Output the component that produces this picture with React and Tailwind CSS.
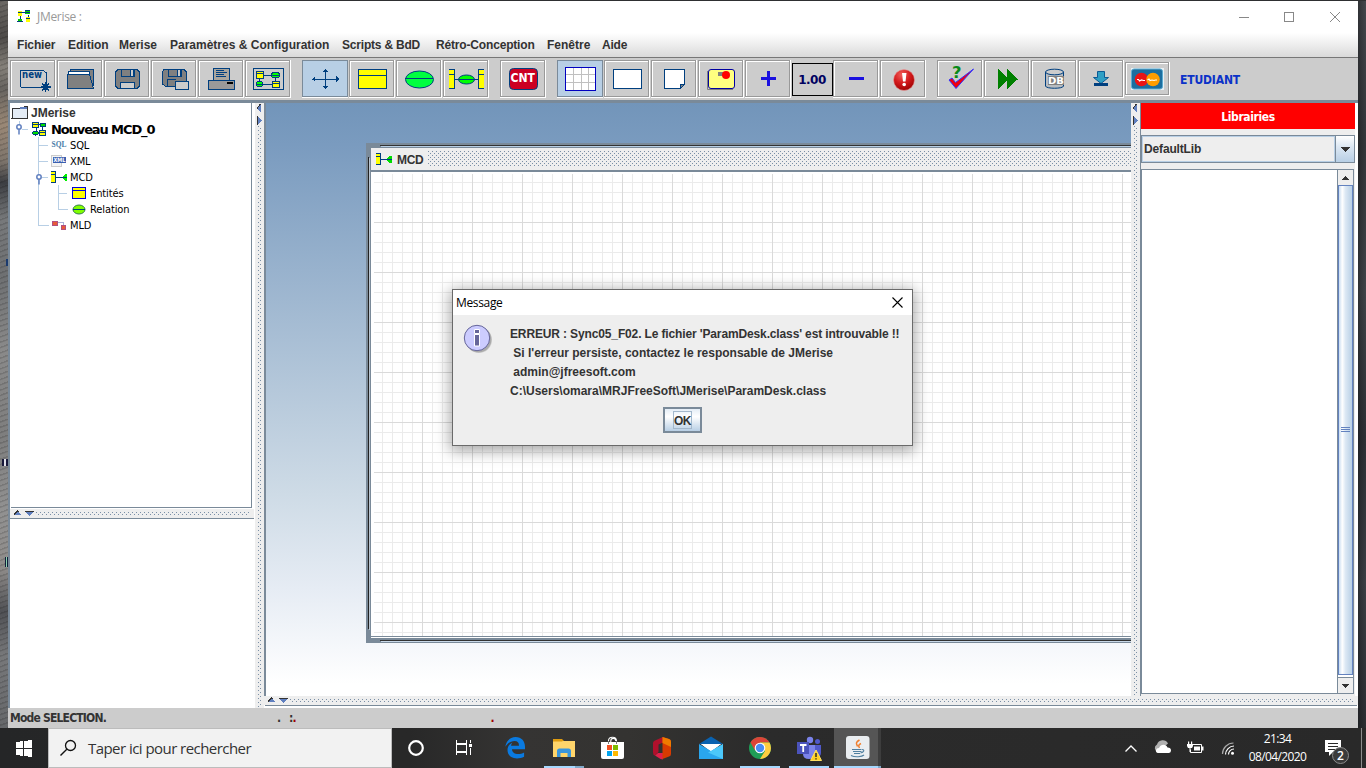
import React from "react";

const DOTS =
  "bg-[#eeeeee] bg-[radial-gradient(circle_at_0.5px_0.5px,#7a8fa6_0.6px,transparent_0.7px),radial-gradient(circle_at_0.5px_0.5px,#7a8fa6_0.6px,transparent_0.7px)] bg-[length:4px_4px]";

function Pic({ x, y, w, h, smooth, children }) {
  return (
    <svg
      className="block shrink-0"
      width={w}
      height={h}
      viewBox={`${x} ${y} ${w} ${h}`}
      shapeRendering={smooth ? "auto" : "crispEdges"}
      fill="none"
    >
      {children}
    </svg>
  );
}

function Tool({ x, on, smooth, children }) {
  return (
    <div className="mr-px h-[38px] w-[46px] shrink-0 border-r border-b border-white">
      <div
        className={
          on
            ? "h-[37px] w-[46px] border border-[#7a8a99] bg-[#b8cfe5]"
            : "h-[37px] w-[45px] border border-[#999999] bg-[#cccccc]"
        }
      >
        <div className={on ? "h-full w-full" : "h-full w-full border-t border-l border-white"}>
          <div className={on ? "" : "-mt-px -ml-px"}>
            <Pic x={x + 1} y={61} w={43} h={35} smooth={smooth}>
              {children}
            </Pic>
          </div>
        </div>
      </div>
    </div>
  );
}

const navy = "#003f7f";

function Toolbar() {
  return (
    <div className="flex h-[42px] shrink-0 items-start bg-[#cccccc] pt-[2px] pl-[2px]">
      <Tool x={10}>
        <path d="M20.5 87V70.5H43.500L46.500 73V85M20.500 87.500H41" stroke={navy} />
        <text x="22" y="77.500" fontSize="10" fontWeight="700" fontFamily="DejaVu Sans, sans-serif" fill={navy} textLength="20" lengthAdjust="spacingAndGlyphs">new</text>
        <path d="M45.500 82V92M40.500 87H50.500M42 83.500L49 90.500M49 83.500L42 90.500" stroke={navy} strokeWidth="1.600" />
        <circle cx="45.500" cy="87" r="3" fill={navy} />
      </Tool>
      <Tool x={57}>
        <path d="M70 73V69.500H93.500V86" stroke={navy} fill="#808080" />
        <path d="M68.500 76V71.500H89L90 74.500" fill="#fff" stroke={navy} />
        <path d="M67.500 74.500H89.500L93.500 88.500H67.500Z" fill="#808080" stroke={navy} />
      </Tool>
      <Tool x={104}>
        <path d="M118 69.500H137L139.500 72V86L137 88.500H118L115.500 86V72Z" fill="#808080" stroke={navy} />
        <path d="M121.500 69.500V76.500H134.500V69.500" stroke={navy} />
        <path d="M130.500 69.500h3v7h-3z" fill="#ccc" stroke={navy} />
        <path d="M120.500 88.500V82.500H134.500V88.500Z" fill="#ccc" stroke={navy} />
      </Tool>
      <Tool x={151}>
        <path d="M164 69.500H184L186.500 72V86H165L162.500 84V72Z" fill="#808080" stroke={navy} />
        <path d="M168.500 69.500V76.500H181.500V69.500M167.500 86V79.500H176" stroke={navy} />
        <path d="M177.500 69.500h3v7h-3z" fill="#ccc" stroke={navy} />
        <path d="M175.500 81.500H188.500V89.500H175.500Z" fill="#ccc" stroke={navy} />
      </Tool>
      <Tool x={198}>
        <path d="M213.500 68.500H229.500V80H213.500Z" fill="#aaa69e" stroke={navy} />
        <path d="M216 70.500h8M216 72.500h11M216 74.500h8M216 76.500h10" stroke={navy} />
        <path d="M208.500 80.500H234.500V89.500H208.500Z" fill="#999" stroke={navy} />
        <path d="M227 82h6v2h-6z" fill="#000" />
      </Tool>
      <Tool x={245}>
        <path d="M253.500 68.500H283.500V89.500H253.500Z" stroke={navy} />
        <path d="M263 75.500h8M259.500 78v4M275.500 78v4M264 84.500h8" stroke={navy} />
        <path d="M256.500 71.500h7v7h-7zM272.500 81.500h7v6h-7zM256 73.500h8M272 83.500h8" fill="#ff0" stroke={navy} />
        <ellipse cx="275.500" cy="75" rx="4.500" ry="2.500" fill="#0f0" stroke={navy} />
        <ellipse cx="259.500" cy="84" rx="3.500" ry="2.500" fill="#0f0" stroke={navy} />
        <path d="M271 75.500h9M256 84.500h8" stroke={navy} />
      </Tool>
      <div className="w-[10px] shrink-0" />
      <Tool x={302} on>
        <path d="M312 79H339M325.500 69.500V88.500" stroke={navy} />
        <path d="M312 79l3-3v6zM339 79l-3-3v6zM325.500 69l-2.500 3h5zM325.500 89l-2.500-3h5z" fill={navy} />
      </Tool>
      <Tool x={349}>
        <path d="M358.500 69.500H386.500V88.500H358.500ZM358.500 75.500H386.500" fill="#ff0" stroke={navy} />
      </Tool>
      <Tool x={396} smooth>
        <ellipse cx="419.500" cy="79.500" rx="14" ry="8.500" fill="#00ff40" stroke={navy} />
        <path d="M405 78.500H433" stroke={navy} />
      </Tool>
      <Tool x={443}>
        <path d="M449 69h6v20h-6zM478 69h6v20h-6z" fill="#ff0" />
        <path d="M449 69.500h5.500v19H449M449 74.500h5M484 69.500h-5.500v19H484M479 74.500h5M455 79.500h24" stroke={navy} />
        <ellipse cx="466.500" cy="79.500" rx="8" ry="4.500" fill="#0f0" stroke={navy} shapeRendering="auto" />
        <path d="M458 79.500h17" stroke={navy} />
      </Tool>
      <div className="w-[10px] shrink-0" />
      <Tool x={500} smooth>
        <rect x="509.500" y="68.500" width="28" height="21" rx="4" fill="#cc0022" stroke={navy} />
        <text x="510.500" y="82.300" fontSize="12" fontWeight="700" fontFamily="DejaVu Sans, sans-serif" fill="#fff" textLength="24.500" lengthAdjust="spacingAndGlyphs">CNT</text>
      </Tool>
      <div className="w-[10px] shrink-0" />
      <Tool x={557} on>
        <path d="M565.500 67.500h30v23h-30z" fill="#fff" stroke="#0000c0" />
        <path d="M573.500 68v22M581.500 68v22M588.500 68v22M566 74.500h29M566 82.500h29" stroke="#c0c0c0" />
      </Tool>
      <Tool x={604}>
        <path d="M613.500 69.500h28v19h-28z" fill="#fff" stroke={navy} />
      </Tool>
      <Tool x={651}>
        <path d="M664.500 69.500h20v15l-4 4h-16z" fill="#fff" stroke={navy} />
        <path d="M680.500 88.500v-4h4z" fill="#808080" stroke={navy} />
      </Tool>
      <Tool x={698} smooth>
        <path d="M707.500 71v18.500H733" stroke="#808080" />
        <rect x="708.500" y="69.500" width="26" height="19" rx="2.500" fill="#ffff80" stroke="#0000a0" />
        <path d="M718 74h7" stroke="#808080" strokeWidth="4" />
        <circle cx="726" cy="75" r="4" fill="#f00" />
      </Tool>
      <Tool x={745}>
        <path d="M761 77h15v3h-15zM767 71h3v15h-3z" fill="#1a10e0" />
      </Tool>
      <div className="mt-[3px] flex h-[33px] w-[41px] shrink-0 items-center justify-center border border-black pr-px font-['DejaVu_Sans'] text-[12px] font-bold tracking-[-0.5px] text-[#000060]">
        1.00
      </div>
      <Tool x={833}>
        <path d="M849 77h15v3h-15z" fill="#1a10e0" />
      </Tool>
      <Tool x={880} smooth>
        <defs>
          <radialGradient id="alert" cx=".4" cy=".25" r=".8">
            <stop offset="0" stopColor="#f0605c" />
            <stop offset=".5" stopColor="#d41a1c" />
            <stop offset="1" stopColor="#900" />
          </radialGradient>
        </defs>
        <circle cx="904" cy="80" r="10.500" fill="url(#alert)" stroke="#e8a0a0" strokeWidth=".6" />
        <path d="M902 73h4.500l-1 8.500h-2.500z" fill="#fff" />
        <circle cx="904.200" cy="84.500" r="1.800" fill="#fff" />
      </Tool>
      <div className="w-[10px] shrink-0" />
      <Tool x={937} smooth>
        <text x="952" y="78" fontSize="15" fontWeight="700" fontFamily="DejaVu Sans, sans-serif" fill="#088a18" textLength="9.500" lengthAdjust="spacingAndGlyphs">?</text>
        <path d="M949 80l3-2 3.500 4.500L973.500 69 956 88.500Z" fill="#f00010" stroke="#3030ff" />
      </Tool>
      <Tool x={984}>
        <path d="M998 69l9 8v-8l10.500 10.500L1007 89v-8l-9 8z" fill="#008000" />
      </Tool>
      <Tool x={1031} smooth>
        <path d="M1045.500 72v14c0 3 18 3 18 0V72" fill="#b8bcc0" stroke={navy} />
        <ellipse cx="1054.500" cy="72" rx="9" ry="2.800" fill="#ccc" stroke={navy} />
        <path d="M1048 76h16v9h-16z" fill="#808080" />
        <text x="1048" y="84" fontSize="9.500" fontWeight="700" fontFamily="DejaVu Sans, sans-serif" fill="#fff" textLength="16" lengthAdjust="spacingAndGlyphs">DB</text>
      </Tool>
      <Tool x={1078} smooth>
        <path d="M1097.500 71.500h7v6h4L1101 83.500l-7.500-6h4z" fill="#2f9fc4" stroke="#0b5a94" />
        <path d="M1094 83h14v3h-14z" fill={navy} />
      </Tool>
      <div className="mt-[2px] h-[34px] w-[45px] shrink-0 border-r border-b border-white">
        <div className="h-[33px] w-[44px] border border-[#999999]">
          <div className="h-full w-full border-t border-l border-white">
            <Pic x={1127} y={64} w={40} h={30} smooth>
              <path d="M1131 68h33v22h-33z" fill="#e8f0f4" />
              <rect x="1131.500" y="69" width="31" height="20" rx="2.500" fill="#1c6e9f" stroke="#5cabd0" />
              <circle cx="1141.500" cy="79.500" r="6.800" fill="#ea1515" />
              <circle cx="1153" cy="79.500" r="6.800" fill="#ff9d00" />
              <path d="M1137 79.500h1.500l1 1.500 2-1 2 .500 1.500 0M1147.500 80l1.500-1 1 1.500 2-.500 2 .500 1.500-.500 1.500 0" stroke="#fff" strokeWidth="1.200" />
            </Pic>
          </div>
        </div>
      </div>
      <div className="ml-[10px] flex h-[40px] items-center font-['DejaVu_Sans_Condensed','DejaVu_Sans'] text-[12px] font-bold tracking-[-0.15px] text-[#0a32c8] [font-stretch:condensed]">
        ETUDIANT
      </div>
    </div>
  );
}

function Handle({ x, y }) {
  return (
    <g shapeRendering="auto">
      <circle cx={x + 0.5} cy={y - 1} r="2.200" fill="#fff" stroke="#5f7fbf" strokeWidth="1.500" />
      <path d={`M${x + 0.5} ${y + 1.500}v5`} stroke="#5f7fbf" strokeWidth="1.500" />
    </g>
  );
}

function Row({ y, w, label, cls, children }) {
  return (
    <div className="flex h-4 items-center whitespace-nowrap">
      <Pic x={11} y={y - 8} w={w} h={16}>
        {children}
      </Pic>
      <span className={cls || "mt-[2px] font-['DejaVu_Sans_Condensed','DejaVu_Sans'] text-[11px] leading-4 tracking-[-0.1px] text-black [font-stretch:condensed]"}>
        {label}
      </span>
    </div>
  );
}

function Tree() {
  const l = "#b8cfe5";
  return (
    <div className="h-[405px] w-[241px] shrink-0 border-r border-b border-[#7a8a99] bg-white pt-[2px]">
      <Row y={113} w={20} label="JMerise" cls="font-['Liberation_Sans'] text-[12px] leading-4 font-bold text-[#333333]">
        <path d="M12.500 108.500h10l2-2h2.500v11.500h-15z" fill="#e4ecf5" stroke="#333" />
        <path d="M20 107h7v2h-7z" fill="#5f7fbf" />
      </Row>
      <Row y={129} w={40} label="Nouveau MCD_0" cls="mt-[2px] font-['DejaVu_Sans'] text-[13px] leading-4 font-bold tracking-[-1.1px] text-black">
        <path d="M19.500 121v5M22 129.500h6" stroke={l} />
        <Handle x={18.500} y={128} />
        <path d="M36 127v8M42.500 126v6M39 124.500h4" stroke={navy} />
        <path d="M32.500 122.500h6v5h-6zM39.500 130.500h6v5h-6zM32 124.500h7M39 132.500h7" fill="#ff0" stroke={navy} />
        <ellipse cx="43" cy="125" rx="3" ry="2" fill="#0d0" stroke={navy} />
        <ellipse cx="35.500" cy="133" rx="3" ry="2" fill="#0d0" stroke={navy} />
      </Row>
      <Row y={145} w={59} label="SQL">
        <path d="M38.500 137v16M38 145.500h10" stroke={l} />
        <text x="51.500" y="147" fontSize="8" fontWeight="700" fontFamily="Liberation Serif, serif" fill="#4a7da8" textLength="15" lengthAdjust="spacingAndGlyphs">SQL</text>
      </Row>
      <Row y={161} w={59} label="XML">
        <path d="M38.500 153v16M38 161.500h10" stroke={l} />
        <path d="M51.500 155.500h10v11h-10z" fill="#f4f4f4" stroke="#ccc" />
        <path d="M53 157h13v6H53z" fill="#3a5fb0" />
        <text x="53.500" y="162.300" fontSize="6" fontWeight="700" fontFamily="DejaVu Sans, sans-serif" fill="#fff" textLength="12" lengthAdjust="spacingAndGlyphs">XML</text>
      </Row>
      <Row y={177} w={59} label="MCD">
        <path d="M38.500 169v16M42 177.500h6" stroke={l} />
        <Handle x={38.500} y={178} />
        <path d="M51 172h4v10h-4z" fill="#ff0" />
        <path d="M51 171.500h4.500v10.500H51M51 174.500h4M56 177.500h7" stroke={navy} />
        <path d="M67 174v7h-2l-2-2v-3l2-2z" fill="#0e0" />
        <path d="M62 177.500h5" stroke={navy} />
      </Row>
      <Row y={193} w={79} label="Entités">
        <path d="M38.500 185v16M58.500 185v16M58 193.500h9" stroke={l} />
        <path d="M72.500 187.500h13v11h-13zM72.500 190.500h13" fill="#ff0" stroke="#0000e0" />
      </Row>
      <Row y={209} w={79} label="Relation">
        <path d="M38.500 201v16M58.500 201v8.500h9" stroke={l} />
        <ellipse cx="79" cy="209.500" rx="6" ry="4.500" fill="#80ff00" stroke="#357a50" shapeRendering="auto" />
        <path d="M73 209.500h12" stroke={navy} />
      </Row>
      <Row y={225} w={59} label="MLD">
        <path d="M38.500 217v8.500h10" stroke={l} />
        <path d="M57 222.500h6.500v3" stroke="#a8b0d8" />
        <path d="M52 221h5v5h-5zM61 225h5v5h-5z" fill="#e85a3a" />
        <path d="M52.500 221.500h5v4h-5zM61.500 225.500h4v4h-4z" stroke="#b05080" />
      </Row>
    </div>
  );
}

function SplitH() {
  return (
    <div className="flex h-[9px] items-center bg-[#eeeeee] pr-1 pl-[3px]">
      <Pic x={0} y={0} w={23} h={9}>
        <path d="M0 6L4 2l5 4z" fill="#5f7fbf" />
        <path d="M1 5.500L4.500 2l1 1" stroke="#333" />
        <path d="M12 2.500h9l-4.500 4.500z" fill="#5f7fbf" />
        <path d="M12 2.500h9" stroke="#333" />
      </Pic>
      <div className={`h-[4px] grow ${DOTS} [background-position:0_0,2px_2px]`} />
    </div>
  );
}

function SplitV({ tall }) {
  return (
    <div className={tall ? "flex h-[605px] w-[9px] shrink-0 flex-col items-center bg-[#eeeeee]" : "flex h-[593px] w-[9px] shrink-0 flex-col items-center bg-[#eeeeee]"}>
      <Pic x={0} y={0} w={9} h={23}>
        <path d="M6 1L2 5.500L6 10z" fill="#5f7fbf" />
        <path d="M5.500 1L2 5.500" stroke="#333" />
        <path d="M3 13l4 4.500L3 22z" fill="#5f7fbf" />
        <path d="M2.500 13v9" stroke="#333" />
      </Pic>
      <div className={`w-[4px] grow ${DOTS} [background-position:0_0,2px_2px]`} />
    </div>
  );
}

function Desktop() {
  return (
    <div className="relative h-[593px] w-[865px] shrink-0 overflow-hidden bg-[linear-gradient(#7295ba_0%,#7a9bbf_7%,#cedbe6_66%,#e6ecf4_82%,#ffffff_98%)]">
      <div className="absolute top-[40px] left-[100px] h-[500px] w-[900px] bg-[#7a8a99] pt-[5px] pl-[5px]">
        <div className="absolute top-[2px] left-[14px] h-px w-[886px] bg-[#333333]" />
        <div className="absolute top-[3px] left-[15px] h-px w-[886px] bg-[#b8cfe5]" />
        <div className="absolute top-[14px] left-[2px] h-[472px] w-px bg-[#222222]" />
        <div className="absolute top-[15px] left-[3px] h-[472px] w-px bg-[#b8c4d0]" />
        <div className="absolute top-[497px] left-[14px] h-px w-[886px] bg-[#333333]" />
        <div className="absolute top-[498px] left-[15px] h-px w-[886px] bg-[#c8d8e8]" />
        <div className="flex h-[22px] items-center bg-[#eeeeee] pl-[5px]">
          <Pic x={376} y={151} w={16} h={16}>
            <path d="M376 153h4v11h-4z" fill="#ff0" />
            <path d="M376 153.500h4.500v11H376M376 156.500h4M381 159.500h8" stroke={navy} />
            <path d="M392 156v7h-2l-3-2v-3l3-2z" fill="#0d0" />
            <path d="M386 159.500h6" stroke={navy} />
          </Pic>
          <span className="mt-[2px] w-[36px] pl-[5px] font-['Liberation_Sans'] text-[12px] font-bold tracking-[-0.3px] text-[#333333]">MCD</span>
          <div className={`h-[16px] grow ${DOTS} [background-position:0_0,2px_2px]`} />
        </div>
        <div className="h-[2px] bg-[#7a8a99]" />
        <div className="h-[464px] bg-white pt-[2px] pl-[3px]">
          <div className="h-[462px] bg-[linear-gradient(90deg,#dadada_1px,transparent_1px),linear-gradient(#dadada_1px,transparent_1px),linear-gradient(90deg,#ebebeb_1px,transparent_1px),linear-gradient(#ebebeb_1px,transparent_1px)] bg-[length:50px_50px,50px_50px,10px_10px,10px_10px] [background-position:48px_0,0_48px,8px_0,0_8px]" />
        </div>
        <div className="h-px bg-[#7a8a99]" />
        <div className="h-px bg-white" />
      </div>
    </div>
  );
}

function Library() {
  return (
    <div className="flex h-[593px] w-[218px] shrink-0 border-l border-[#7a8a99] bg-[#eeeeee]">
      <div className="w-[214px] shrink-0">
        <div className="flex h-[26px] items-center justify-center bg-[#ff0000] pt-px font-['DejaVu_Sans_Condensed','DejaVu_Sans'] text-[12px] font-bold tracking-[-0.4px] text-white [font-stretch:condensed]">
          Librairies
        </div>
        <div className="mt-[6px] flex h-[28px] border border-[#7a8a99]">
          <div className="flex w-[193px] items-center border border-[#b8cfe5] pl-px font-['Liberation_Sans'] text-[12px] font-bold tracking-[-0.15px] text-[#333333]">
            DefaultLib
          </div>
          <div className="flex grow items-center justify-center border-l border-[#7a8a99] bg-[linear-gradient(#ffffff,#dde8f3_40%,#b8cfe5)]">
            <Pic x={0} y={0} w={10} h={5}>
              <path d="M0 0h10L5 5z" fill="#333" />
            </Pic>
          </div>
        </div>
        <div className="mt-[6px] flex h-[525px] w-[213px] justify-end border border-[#7a8a99] bg-white">
          <div className="flex w-[16px] flex-col border-l border-[#7a8a99]">
            <div className="flex h-[15px] items-center justify-center bg-[#eeeeee]">
              <Pic x={0} y={0} w={9} h={4}>
                <path d="M0 4h9L4.500 0z" fill="#333" />
              </Pic>
            </div>
            <div className="flex grow items-center justify-center border border-[#6382bf] bg-[linear-gradient(90deg,#c8dcf0,#ffffff_25%,#dce8f4_50%,#b8cfe5)]">
              <Pic x={0} y={0} w={9} h={6}>
                <path d="M0 .500h9M0 2.500h9M0 4.500h9" stroke="#6382bf" />
              </Pic>
            </div>
            <div className="mt-[2px] flex h-[16px] items-center justify-center border-t border-[#7a8a99] bg-[#eeeeee]">
              <Pic x={0} y={0} w={9} h={4}>
                <path d="M0 0h9L4.500 4z" fill="#333" />
              </Pic>
            </div>
          </div>
        </div>
      </div>
      <div className="w-[3px] bg-white" />
    </div>
  );
}

function Dialog() {
  return (
    <div className="absolute top-[289px] left-[452px] h-[157px] w-[461px] border border-[#6a6a6a] bg-[#eeeeee] shadow-[0_3px_14px_2px_rgba(0,0,0,0.35)]">
      <div className="flex h-[25px] items-center justify-between bg-white pr-[9px] pl-[3px]">
        <span className="font-['Open_Sans'] text-[12px] leading-none tracking-[-0.35px] text-black">Message</span>
        <Pic x={0} y={0} w={11} h={11} smooth>
          <path d="M.500 .500l10 10M10.500 .500l-10 10" stroke="#000" strokeWidth="1.100" />
        </Pic>
      </div>
      <div className="flex pt-[7px] pl-[9px]">
        <Pic x={462} y={322} w={34} h={34} smooth>
          <circle cx="479" cy="340" r="13" fill="#000" opacity=".12" />
          <circle cx="478.500" cy="339.500" r="13" fill="#000" opacity=".18" />
          <circle cx="477" cy="338" r="12.700" fill="#ccccff" stroke="#666699" />
          <path d="M474.500 329.500h5v4h-5zM474.500 334.500h5v11.500h-5z" fill="#666699" stroke="#fff" />
        </Pic>
        <div className="pt-[3px] pl-[14px] font-['Liberation_Sans'] text-[12px] leading-[19px] font-bold whitespace-pre text-[#333333]">
          <div className="tracking-[-0.135px]">ERREUR : Sync05_F02. Le fichier 'ParamDesk.class' est introuvable !!</div>
          <div> Si l'erreur persiste, contactez le responsable de JMerise</div>
          <div> admin@jfreesoft.com</div>
          <div>C:\Users\omara\MRJFreeSoft\JMerise\ParamDesk.class</div>
        </div>
      </div>
      <div className="mt-[6px] ml-[210px] flex h-[26px] w-[39px] items-center justify-center border-2 border-[#7a8a99] bg-[linear-gradient(#e4edf6,#ffffff_35%,#b8cfe5)]">
        <span className="flex h-[18px] w-[19px] items-center justify-center border border-[#a3b8cc] pt-[2px] font-['Liberation_Sans'] text-[12px] font-bold tracking-[-0.5px] text-[#333333]">OK</span>
      </div>
    </div>
  );
}

function Slot({ x, bar, active, children }) {
  return (
    <div className={active ? "flex h-10 w-[49px] shrink-0 flex-col bg-[linear-gradient(90deg,transparent_1px,#555555_1px,#555555_45px,#3d3d3d_45px,#3d3d3d_48px,transparent_48px)]" : "flex h-10 w-[49px] shrink-0 flex-col"}>
      <Pic x={x} y={728} w={49} h={38} smooth>
        {children}
      </Pic>
      {bar && <div className={bar} />}
    </div>
  );
}

function Taskbar() {
  return (
    <div className="flex h-10 w-[1366px] shrink-0 bg-[#2a2a2a] bg-[linear-gradient(90deg,#252627,#282828_30%,#353433_38%,#343331_46%,#2b2b2b_56%,#292929)]">
      <Pic x={0} y={728} w={48} h={40}>
        <path d="M16 742l7-1v7h-7zM24 741l8-1v8h-8zM16 749h7v7l-7-1zM24 749h8v8l-8-1z" fill="#fff" />
      </Pic>
      <div className="flex h-10 w-[344px] shrink-0 items-center border border-[#bcbcbc] bg-[#f2f2f2] pl-[11px]">
        <Pic x={60} y={739} w={17} h={18} smooth>
          <circle cx="70.500" cy="745.500" r="5" stroke="#111" strokeWidth="1.300" />
          <path d="M66.800 749.200L60.500 755.500" stroke="#111" strokeWidth="1.400" />
        </Pic>
        <span className="pl-[11px] font-['Open_Sans'] text-[15px] leading-none tracking-[-0.55px] whitespace-nowrap text-[#333333]">Taper ici pour rechercher</span>
      </div>
      <Pic x={392} y={728} w={48} h={40} smooth>
        <circle cx="416" cy="748" r="6.800" stroke="#fff" strokeWidth="2.200" />
      </Pic>
      <Pic x={440} y={728} w={50} h={40}>
        <path d="M456.500 740v3h10v-3M456.500 744.500h10v7h-10zM456.500 755v-2.500h10v2.500M470.500 740v3M470.500 748v7" stroke="#fff" />
        <path d="M469 744h3v3h-3z" fill="#fff" />
      </Pic>
      <Slot x={490}>
        <path d="M505.300 746.800c.9-5.800 4.900-9.800 10.300-9.800 6 0 9.400 4.300 9.400 9.800v2.500h-13c.1 3.200 2.900 4.800 6 4.800 2.200 0 4.300-.6 6.100-1.700v4.300c-2.100 1.200-4.600 1.700-7.100 1.700-5.700 0-9.500-3.200-9.500-8.300 0-3.400 1.900-6.200 4.900-7.700-.8 1-1.200 2.100-1.300 3.300h7.900c0-3-1.500-4.600-4.300-4.600-3.900 0-7.300 2.400-9.400 5.700z" fill="#0a7ae0" />
      </Slot>
      <Slot x={539} bar="h-[2px] ml-[5px] w-[40px] bg-[linear-gradient(90deg,#a6d8ff_31px,#7fa8c8_31px)]">
        <path d="M553 739h9l2 2v3h-11z" fill="#e09c10" />
        <path d="M553 741h22v16h-22z" fill="#ffd56b" />
        <path d="M553 739h8.500l1 2.500h-9.500z" fill="#e09c10" />
        <path d="M557 757v-6q0-2.500 2.500-2.500h9q2.500 0 2.500 2.500v6h-3.500v-4h-7v4H557z" fill="#3a96dd" />
      </Slot>
      <Slot x={588}>
        <path d="M608.500 744v-3c0-5 8-5 8 0v3M610.800 744v-3c0-3.500 5-3.500 5 0" stroke="#fff" strokeWidth="1.100" />
        <path d="M601 742h23v15q0 2-2 2h-19q-2 0-2-2z" fill="#fff" />
        <path d="M608.500 744v-3M616.500 744v-3" stroke="#555" strokeWidth=".8" />
        <path d="M607 745h5v5h-5z" fill="#f25022" />
        <path d="M613 745h5v5h-5z" fill="#7fba00" />
        <path d="M607 751h5v5h-5z" fill="#00a4ef" />
        <path d="M613 751h5v5h-5z" fill="#ffb900" />
      </Slot>
      <Slot x={637}>
        <path d="M653 743q0-1.500 1.500-2.300L663 737v5.500l-4.500 2v7.500L655 755.500q-2-.500-2-3z" fill="#b0102c" />
        <path d="M655 755.500l3-2.500h5v6.500l-2.500-.500z" fill="#e0204a" />
        <path d="M662.500 737l6.500 2q2 .500 2 3v12q0 2-2 2.500l-6.500 2.500z" fill="#d83b01" />
        <path d="M662.500 737l6.500 2q2 .500 2 3v5l-8.500-4z" fill="#ef7b00" />
      </Slot>
      <Slot x={686}>
        <path d="M699 744l12-7.500 12 7.500z" fill="#0a62b0" />
        <path d="M701 744h20l-10 8z" fill="#fff" />
        <path d="M699 744l12 7 12-7v15h-24z" fill="#2aa6ee" />
        <path d="M701 744h20l-10 6.500z" fill="#fff" />
        <path d="M723 744l-12 7-3 1.500L723 759z" fill="#4cc8fa" />
      </Slot>
      <Slot x={735} bar="h-[2px] ml-[5px] w-[40px] bg-[#a6d8ff]">
        <circle cx="760" cy="748" r="11" fill="#1f9d57" />
        <path d="M760 737a11 11 0 0 1 9.500 5.500h-9.500L755 750.500l-4.500-8A11 11 0 0 1 760 737z" fill="#dc4438" />
        <path d="M760 742.500h9.500A11 11 0 0 1 760 759l5-8z" fill="#ffcd40" />
        <circle cx="760" cy="748" r="5.300" fill="#fff" />
        <circle cx="760" cy="748" r="4.200" fill="#4a8cf5" />
      </Slot>
      <Slot x={784} bar="h-[2px] ml-[5px] w-[40px] bg-[#a6d8ff]">
        <circle cx="810" cy="740" r="3.200" fill="#7b83eb" />
        <circle cx="817.500" cy="741.500" r="2.500" fill="#5059c9" />
        <path d="M814 745h7v8q0 4-5 4h-4z" fill="#5059c9" />
        <path d="M804 745h11v9q0 5-6 5t-6-5z" fill="#7b83eb" />
        <path d="M797 742h12v12h-12z" fill="#4b53bc" />
        <path d="M800 745h6.500M803.200 745v7" stroke="#fff" strokeWidth="1.800" />
        <path d="M816 750l5.500 10.500h-11z" fill="#ffd020" stroke="#ffe060" />
        <path d="M816 753v4M816 758.200v1.300" stroke="#222" strokeWidth="1.400" />
      </Slot>
      <Slot x={833} active bar="h-[2px] ml-px w-[47px] bg-[linear-gradient(90deg,#a6d8ff_44px,#7fa8c8_44px)]">
        <rect x="846" y="736" width="23.500" height="23" rx="3" fill="#e9edf0" />
        <path d="M859.500 740c-5 3-2.500 4-2 6.500M861 743.500c-3 1.500-2.500 2.500-1.500 4.500" stroke="#f08030" strokeWidth="1.500" />
        <path d="M852 749.500h9.500M853 751.500h8.500M854 753.500h6M862 749.500c3 0 2 3-1.500 3.500M851 755.500c4 2 11 1.500 13-.500" stroke="#5080a0" strokeWidth="1.100" />
      </Slot>
      <div className="grow" />
      <Pic x={1118} y={728} w={124} h={40} smooth>
        <path d="M1125.500 751.500l5.500-5.500 5.500 5.500" stroke="#fff" strokeWidth="1.300" />
        <path d="M1158 752a4 4 0 0 1-1-7.500 6 6 0 0 1 11-1z" fill="#b0b0b0" />
        <path d="M1158 753q-2.500-.500-2-3 .500-2 3-2 2-4 6-3 2 .500 2.500 2.500 3.500 0 3.500 3 0 2-2 2.500z" fill="#fff" />
        <path d="M1192.500 744.500h9v8h-11v-3" stroke="#fff" />
        <path d="M1194 746.500h6v4h-6zM1202 746.500h1.500v4h-1.500zM1187 744h6v2l-1 2h-1.500v4h-1v-4h-1.500l-1-2zM1188 741.500h1.200v3h-1.200zM1191 741.500h1.200v3h-1.200z" fill="#fff" />
        <path d="M1222.500 754c0-6 5-11 11-11" stroke="#aaa" strokeWidth="1.200" />
        <path d="M1225.500 754.500c0-4.500 4-8.500 8.500-8.500M1228.500 754.500c0-3 2.500-5.500 5.500-5.500" stroke="#fff" strokeWidth="1.200" />
        <circle cx="1232.500" cy="753.300" r="1.500" fill="#fff" />
      </Pic>
      <div className="flex w-[71px] shrink-0 flex-col items-center pt-[2px] font-['Open_Sans'] text-[12px] leading-[18px] tracking-[-0.6px] whitespace-nowrap text-white">
        <div>21:34</div>
        <div>08/04/2020</div>
      </div>
      <Pic x={1313} y={728} w={53} h={40} smooth>
        <path d="M1325 740h16v12h-8l-4 4v-4h-4z" fill="#fff" />
        <path d="M1328 743.500h10M1328 746.500h10M1328 749.500h7" stroke="#2a2a2a" />
        <circle cx="1340.500" cy="755.500" r="8" fill="#3b3b3b" stroke="#8c8c8c" />
        <text x="1337" y="760" fontSize="12" fontFamily="Open Sans, sans-serif" fontWeight="600" fill="#fff">2</text>
        <path d="M1361.500 728v40" stroke="#8c8c8c" shapeRendering="crispEdges" />
      </Pic>
    </div>
  );
}

const MENUS = [
  ["Fichier", "w-[51px] tracking-[-0.15px]"],
  ["Edition", "w-[51px]"],
  ["Merise", "w-[51px]"],
  ["Paramètres & Configuration", "w-[172px]"],
  ["Scripts & BdD", "w-[94px] tracking-[-0.2px]"],
  ["Rétro-Conception", "w-[111px] tracking-[-0.17px]"],
  ["Fenêtre", "w-[55px]"],
  ["Aide", "w-[40px] tracking-[-0.2px]"],
];

export default function App() {
  return (
    <div className="relative flex h-[768px] w-[1366px] flex-col overflow-hidden bg-[#2e2f31]">
      <div className="flex h-[728px] shrink-0 pt-px">
        <div className="h-[727px] w-[8px] shrink-0 bg-[repeating-linear-gradient(160deg,rgba(0,0,0,0.14)_0px,rgba(0,0,0,0.14)_1px,transparent_2px,transparent_5px),linear-gradient(#6c6965,#4d4a48_5%,#85817a_9%,#676460_12%,#9a8876_17%,#7e756c_22%,#3c3e42_25%,#77797b_30%,#6e7072_38%,#8a8a8a_48%,#7e7e7e_60%,#919191_70%,#8f8c8a_78%,#505155_84%,#77787a_90%,#65676a)]">
          <div className="pt-[258px] pl-[6px]"><div className="h-[7px] w-[2px] bg-[#1b3b6e]" /></div>
          <div className="pt-[193px] pl-[2px]"><div className="h-[7px] w-[6px] border-x-2 border-[#19193a] bg-[#e0e0e8]" /></div>
          <div className="pt-[91px] pl-[5px]"><div className="h-[10px] w-[3px] border-x border-[#10203a] bg-[#8fd0b0]" /></div>
        </div>
        <div className="w-[1350px] shrink-0 bg-white">
          <div className="flex h-[32px] items-center pl-[9px]">
            <Pic x={17} y={9} w={15} h={14}>
              <path d="M20 15v4M28.500 14v4M22 11.500h4" stroke={navy} />
              <path d="M18 10h4v5h-4zM26 16h4v5h-4z" fill="#ff0" />
              <path d="M18 11.500h4M26 17.500h4" stroke={navy} />
              <path d="M25 10h5v3h-5zM18 18h4v3h-4z" fill="#0c0" />
              <path d="M25 9.500h5M24 11.500h6M17 20.500h6" stroke={navy} />
            </Pic>
            <span className="w-[1206px] pl-[5px] font-['Open_Sans'] text-[12px] leading-none tracking-[-0.3px] text-[#999999]">JMerise :</span>
            <Pic x={1238} y={8} w={104} h={14} smooth>
              <path d="M1239 15.500h10M1284.500 10.500h9v9h-9z" stroke="#888" shapeRendering="crispEdges" />
              <path d="M1330 10l10 10M1340 10l-10 10" stroke="#888" />
            </Pic>
          </div>
          <div className="flex h-[25px] items-center border-b border-[#777777] bg-[linear-gradient(#ffffff,#dadada)] pl-[9px] font-['Liberation_Sans'] text-[12px] font-bold whitespace-nowrap text-[#333333]">
            {MENUS.map(([label, w]) => (
              <div key={label} className={`${w} shrink-0`}>{label}</div>
            ))}
          </div>
          <Toolbar />
          <div className="h-[3px] bg-[#7a8a99]" />
          <div className="flex h-[605px]">
            <div className="flex h-[605px] w-[247px] shrink-0 flex-col border-l-2 border-[#7a8a99] pl-px">
              <Tree />
              <div className="h-px" />
              <div className="-ml-px w-[244px] border-b border-[#7a8a99]">
                <SplitH />
              </div>
            </div>
            <SplitV tall />
            <div className="flex w-[1094px] shrink-0 flex-col">
              <div className="flex border-l-2 border-[#7a8a99]">
                <Desktop />
                <SplitV />
                <Library />
              </div>
              <SplitH />
              <div className="mx-px h-px bg-[#7a8a99]" />
            </div>
          </div>
          <div className="flex h-[20px] bg-[#cccccc] pl-[2px] font-['DejaVu_Sans_Condensed','DejaVu_Sans'] text-[12px] leading-[20px] font-bold tracking-[-0.8px] text-[#333333] [font-stretch:condensed]">
            <span className="w-[267px]">Mode SELECTION.</span>
            <span className="w-[12px]">.</span>
            <span>:</span>
            <span className="w-[198px] text-[#a00000]">.</span>
            <span className="text-[#a00000]">.</span>
          </div>
        </div>
        <div className="h-[727px] w-[8px] shrink-0 bg-[linear-gradient(90deg,rgba(0,0,0,0.3),transparent),linear-gradient(#45484d,#34373b_20%,#41454a_40%,#2e3136_60%,#3c4046_80%,#2c2f33)]" />
      </div>
      <Taskbar />
      <Dialog />
    </div>
  );
}
